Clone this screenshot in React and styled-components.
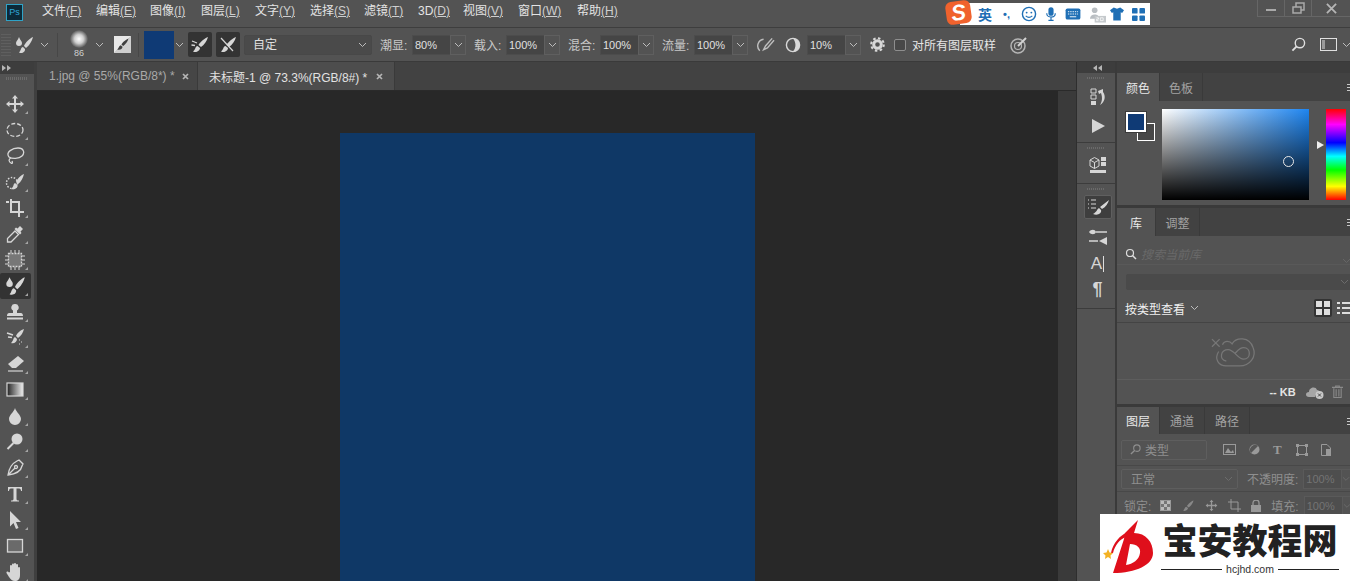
import React from "react";
import styled, { createGlobalStyle } from "styled-components";

const GlobalStyle = createGlobalStyle`
  html, body { margin: 0; padding: 0; height: 100%; overflow: hidden; background: #282828; }
  #root { height: 100%; }
  * { box-sizing: border-box; }
`;

const FONT = `"Liberation Sans", "Noto Sans CJK SC", sans-serif`;
const ICON = "#d6d6d6";
const DIM = "#8f8f8f";
const BLUE = "#1f6fb5";

const MENU = [
  ["文件", "F", 54], ["编辑", "E", 54], ["图像", "I", 51], ["图层", "L", 54], ["文字", "Y", 55],
  ["选择", "S", 54], ["滤镜", "T", 54], ["3D", "D", 45], ["视图", "V", 55], ["窗口", "W", 59], ["帮助", "H", 50],
];

function Brush({ size = 20, color = ICON }) {
  return (
    <svg width={size} height={size} viewBox="0 0 20 20">
      <path d="M18 2 C15 3 10 7 8.500 10 L11 12 C14 10 17 6 18 2Z M7.500 11 C5 11.500 5.500 15 3 16.500 C6 18 10 16 10 13Z" fill={color} />
    </svg>
  );
}

function BrushDrop({ size = 22, color = ICON }) {
  return (
    <svg width={size} height={size} viewBox="0 0 22 22">
      <path d="M6 3 C7 6 9 7 9 9 A3 3 0 0 1 3 9 C3 7 5 6 6 3Z" fill={color} />
      <path d="M20 3 C17 4 12 9 11 12 L13 14 C16 12 19 7 20 3Z M10 13 C7.500 13.500 8 17 6 18.500 C9 20 12.500 18 12 15Z" fill={color} />
    </svg>
  );
}

function Caret({ color = "#bdbdbd" }) {
  return (
    <svg width="9" height="6" viewBox="0 0 9 6">
      <path d="M1 1 L4.500 4.500 L8 1" fill="none" stroke={color} strokeWidth="1" />
    </svg>
  );
}

function DoubleArrow({ left }) {
  return (
    <svg width="9" height="6" viewBox="0 0 9 6">
      {left
        ? <path d="M4 0 V6 L0 3Z M9 0 V6 L5 3Z" fill="#b5b5b5" />
        : <path d="M0 0 V6 L4 3Z M5 0 V6 L9 3Z" fill="#b5b5b5" />}
    </svg>
  );
}

function CloseX() {
  return (
    <svg width="7" height="7" viewBox="0 0 7 7">
      <path d="M1 1 L6 6 M6 1 L1 6" stroke="#b5b5b5" strokeWidth="1.700" />
    </svg>
  );
}

const TOOLS = [
  <path d="M10 1 L13 4.500 H11 V9 H15.500 V7 L19 10 L15.500 13 V11 H11 V15.500 H13 L10 19 L7 15.500 H9 V11 H4.500 V13 L1 10 L4.500 7 V9 H9 V4.500 H7Z" fill={ICON} />,
  <ellipse cx="10" cy="10" rx="8" ry="6.500" fill="none" stroke={ICON} strokeWidth="1.300" strokeDasharray="4 2" />,
  <path d="M4 11 C0 6 8 2 13 2 C19 2 20 7 17 10 C14 13 7 13 4 11 M6 12 C3 13 4 16 6 17 C7 18 8 17 7 15" fill="none" stroke={ICON} strokeWidth="1.300" />,
  <><circle cx="7" cy="11" r="5.500" fill="none" stroke={ICON} strokeWidth="1.500" strokeDasharray="1.500 1.500" /><path d="M19 2 C16 3 12 7 11 10 L13 12 C16 10 18 6 19 2Z M10 11 C8 12 9 15 6 17 C10 18 13 16 12.500 13Z" fill={ICON} /></>,
  <path d="M1 4 H4 M6 1 V14 H18 M6 4 H14 V17 M16 14 H19 M14 14 V19" fill="none" stroke={ICON} strokeWidth="2" />,
  <><path d="M15 2 L18 5 L15.500 7.500 L16.500 9 L15 10.500 L9.500 5 L11 3.500 L12.500 4.500Z" fill={ICON} /><path d="M10 7 L13.500 10.500 L6 18 L2.500 18 L2.500 14.500Z" fill="none" stroke={ICON} strokeWidth="1.300" /></>,
  <><rect x="3.500" y="3.500" width="13" height="13" fill="#777" stroke={ICON} strokeWidth="1.300" strokeDasharray="2 1" /><path d="M6 0 V3 M10 0 V3 M14 0 V3 M6 17 V20 M10 17 V20 M14 17 V20 M0 6 H3 M0 10 H3 M0 14 H3 M17 6 H20 M17 10 H20 M17 14 H20" stroke={ICON} strokeWidth="1" /></>,
  null,
  <path d="M10 2 A3.500 3.500 0 0 1 12 8.500 V11 H16 C18 11 18 14 18 14 H2 C2 14 2 11 4 11 H8 V8.500 A3.500 3.500 0 0 1 10 2Z M2 15.500 H18 V17.500 H2Z" fill={ICON} />,
  <><path d="M19 1 C16 2 12 5 11 8 L13 10 C16 8 18 5 19 1Z M10 9 C8 10 8.500 13 6 15 C9 16 12 14 12 11Z" fill={ICON} /><path d="M2 5 L8 7 M3 9 L7 9.500" stroke={ICON} strokeWidth="1.500" /><path d="M14 12 h1 M16 14 h1 M14 16 h1" stroke={ICON} /></>,
  <><path d="M13 2 L19 7 L11 14 H7 L3 10Z" fill={ICON} /><path d="M3 17 H18" stroke={ICON} strokeWidth="1.200" /></>,
  <><defs><linearGradient id="toolGrad"><stop offset="0" stopColor="#222" /><stop offset="1" stopColor="#eee" /></linearGradient></defs><rect x="2" y="3" width="16" height="13" fill="url(#toolGrad)" stroke={ICON} strokeWidth="1.200" /></>,
  <path d="M10 2 C11 6 16 9 16 13 A6 6 0 0 1 4 13 C4 9 9 6 10 2Z" fill={ICON} />,
  <><circle cx="12" cy="7" r="5.500" fill={ICON} /><path d="M8.500 11 L2.500 17" stroke={ICON} strokeWidth="2" /></>,
  <path d="M14 2 L18 6 L17 8 C16 13 11 16 3 17 C4 10 8 5 12 3Z M4 16 L9.500 10.500 M11 9 m-1.500 0 a1.500 1.500 0 1 0 3 0 a1.500 1.500 0 1 0 -3 0" fill="none" stroke={ICON} strokeWidth="1.300" />,
  <path d="M3 3 H17 V7 H16 C16 5 15 4.500 13 4.500 H11.500 V15 C11.500 16 12.500 16.500 14 16.500 V17.500 H6 V16.500 C7.500 16.500 8.500 16 8.500 15 V4.500 H7 C5 4.500 4 5 4 7 H3Z" fill={ICON} />,
  <path d="M5 1 L16 12 H11 L13.500 18 L11 19 L8.500 13 L5 16.500Z" fill={ICON} />,
  <rect x="2.500" y="3.500" width="15" height="12.500" fill="#6a6a6a" stroke={ICON} strokeWidth="1.300" />,
  <path d="M5 10 V4 A1 1 0 0 1 7 4 V9 V2.500 A1 1 0 0 1 9 2.500 V9 V2 A1 1 0 0 1 11 2 V9 V3 A1 1 0 0 1 13 3 V10 V6 A1 1 0 0 1 15 6 V13 C15 17 13 19 10 19 C7 19 6 17.500 4 15 L1.500 11 C1 9.500 3 9 4 10.500Z" fill={ICON} />,
];

function PercentField({ value }) {
  return (
    <>
      <Percent>{value}</Percent>
      <PercentCaret><Caret /></PercentCaret>
    </>
  );
}

function App() {
  return (
    <Window>
      <GlobalStyle />
      <MenuBar>
        <PsLogo>Ps</PsLogo>
        {MENU.map(([name, key, w]) => (
          <MenuItem key={key} $w={w}>{name}<Mnemonic>({key})</Mnemonic></MenuItem>
        ))}
        <WindowControls>
          <WinButton><svg width="12" height="12" viewBox="0 0 12 12"><rect x="1" y="7" width="10" height="2" fill="#a9a9a9" /></svg></WinButton>
          <WinButton><svg width="13" height="13" viewBox="0 0 13 13"><path d="M4 1 H12 V8 H9 V11 H1 V5 H4Z M4 5 H9 V8" fill="none" stroke="#a9a9a9" strokeWidth="1.500" /></svg></WinButton>
          <WinButton $wide><svg width="11" height="11" viewBox="0 0 12 12"><path d="M1 1 L11 11 M11 1 L1 11" stroke="#b5b5b5" strokeWidth="2" /></svg></WinButton>
        </WindowControls>
      </MenuBar>
      <Sogou>
        <SogouBadge>S</SogouBadge>
        <SogouRow>
          <SogouText>英</SogouText>
          <SogouPunct>•,</SogouPunct>
          <svg width="16" height="16" viewBox="0 0 17 17"><circle cx="8.500" cy="8.500" r="7" fill="none" stroke={BLUE} strokeWidth="1.500" /><circle cx="6" cy="7" r="1" fill={BLUE} /><circle cx="11" cy="7" r="1" fill={BLUE} /><path d="M5 10.500 Q8.500 13.500 12 10.500" fill="none" stroke={BLUE} strokeWidth="1.200" /></svg>
          <svg width="12" height="18" viewBox="0 0 14 18"><rect x="4" y="1" width="6" height="10" rx="3" fill={BLUE} /><path d="M2 8 C2 14 12 14 12 8 M7 13 V16 M4 16.500 H10" fill="none" stroke={BLUE} strokeWidth="1.400" /></svg>
          <svg width="16" height="12" viewBox="0 0 17 13"><rect x="0.500" y="0.500" width="16" height="12" rx="2" fill={BLUE} /><path d="M3 4 H14 M3 6.500 H14" stroke="#fff" strokeDasharray="1.500 1" /><path d="M5 9.500 H12" stroke="#fff" /></svg>
          <svg width="17" height="17" viewBox="0 0 18 17"><circle cx="6" cy="4" r="3" fill="#b9bec2" /><path d="M1 13 C1 7 11 7 11 13Z" fill="#b9bec2" /><rect x="6" y="10" width="12" height="7" fill="#c5c9cc" /><path d="M8 12 h2 v1.500 h-2 v1.500 h2 M12 12 h3 v3 h-3z" fill="none" stroke="#fff" strokeWidth="0.800" /></svg>
          <SogouShirt width="14" height="14" viewBox="0 0 15 14"><path d="M4 0 L7.500 1.500 L11 0 L15 3 L13 6 L11.500 5 V14 H3.500 V5 L2 6 L0 3Z" fill={BLUE} /></SogouShirt>
          <svg width="13" height="13" viewBox="0 0 14 14"><rect width="6" height="6" rx="1" fill={BLUE} /><rect x="8" width="6" height="6" rx="1" fill={BLUE} /><rect y="8" width="6" height="6" rx="1" fill={BLUE} /><rect x="8" y="8" width="6" height="6" rx="1" fill={BLUE} /></svg>
        </SogouRow>
      </Sogou>
      <OptionsBar>
        <Grip />
        <IconSlot $w={26}><BrushDrop /></IconSlot>
        <IconSlot $w={14}><Caret /></IconSlot>
        <Divider $ml={6} $mr={8} />
        <BrushPreset><SoftDot /><PresetSize>86</PresetSize></BrushPreset>
        <IconSlot $w={14}><Caret /></IconSlot>
        <PanelToggle><Brush size={15} color="#3f3f3f" /></PanelToggle>
        <Divider $ml={7} $mr={5} />
        <ColorChip />
        <IconSlot $w={10} $mr={4}><Caret /></IconSlot>
        <DarkToggle>
          <svg width="20" height="20" viewBox="0 0 20 20"><path d="M18 2 C15 3 10 7 8.500 10 L11 12 C14 10 17 6 18 2Z M7.500 11 C5 11.500 5.500 15 3 16.500 C6 18 10 16 10 13Z" fill={ICON} /><path d="M2 6 L7 8 M1.500 10 L5 10.500" stroke={ICON} strokeWidth="1.300" /></svg>
        </DarkToggle>
        <DarkToggle>
          <svg width="20" height="20" viewBox="0 0 20 20"><path d="M18 2 C15 3 10 7 8.500 10 L11 12 C14 10 17 6 18 2Z M7.500 11 C5 11.500 5.500 15 3 16.500 C6 18 10 16 10 13Z" fill={ICON} /><path d="M3 3 L15 16" stroke={ICON} strokeWidth="1.200" /></svg>
        </DarkToggle>
        <SelectBox>自定<Caret /></SelectBox>
        <Label>潮显:</Label>
        <PercentField value="80%" />
        <Label>载入:</Label>
        <PercentField value="100%" />
        <Label>混合:</Label>
        <PercentField value="100%" />
        <Label>流量:</Label>
        <PercentField value="100%" />
        <IconSlot $w={34}><svg width="19" height="18" viewBox="0 0 20 18"><path d="M8 3 A7 7 0 0 0 4 15 M17 2 L10 10 L8 14 L12 12 L19 4" fill="none" stroke="#bdbdbd" strokeWidth="1.500" /></svg></IconSlot>
        <IconSlot $w={21} $mr={4}><svg width="16" height="16" viewBox="0 0 17 17"><circle cx="8.500" cy="8.500" r="7" fill="none" stroke="#d8d8d8" strokeWidth="1.500" /><path d="M8.500 1.500 A7 7 0 0 1 8.500 15.500 C12 11 12 6 8.500 1.500Z" fill="#d8d8d8" /></svg></IconSlot>
        <PercentField value="10%" />
        <IconSlot $w={33}><svg width="15" height="15" viewBox="0 0 15 15"><circle cx="7.500" cy="7.500" r="3.800" fill="none" stroke="#d8d8d8" strokeWidth="3" /><circle cx="7.500" cy="7.500" r="6.300" fill="none" stroke="#d8d8d8" strokeWidth="2" strokeDasharray="2.500 2.400" /></svg></IconSlot>
        <CheckBox />
        <CheckLabel>对所有图层取样</CheckLabel>
        <IconSlot $w={46}><svg width="18" height="18" viewBox="0 0 18 18"><circle cx="8" cy="10" r="7" fill="none" stroke="#b5b5b5" strokeWidth="1.500" /><circle cx="8" cy="10" r="3.500" fill="none" stroke="#b5b5b5" strokeWidth="1.200" /><path d="M8 10 L16 2" stroke="#d4d4d4" strokeWidth="2" /></svg></IconSlot>
        <OptionsRight>
          <svg width="15" height="15" viewBox="0 0 16 16"><circle cx="9.500" cy="6.500" r="5" fill="none" stroke="#e0e0e0" strokeWidth="1.500" /><path d="M6 10 L1.500 14.500" stroke="#e0e0e0" strokeWidth="2" /></svg>
          <svg width="17" height="13" viewBox="0 0 17 13"><rect x="0.500" y="0.500" width="16" height="12" fill="none" stroke="#e0e0e0" /><rect x="2" y="2" width="3" height="9" fill="#9a9a9a" /></svg>
          <Caret />
        </OptionsRight>
      </OptionsBar>
      <Body>
        <ToolColumn>
          <CollapseStrip><DoubleArrow /></CollapseStrip>
          <ToolGrip />
          {TOOLS.map((icon, i) => (
            <ToolButton key={i} $active={icon === null}>
              {icon === null ? <BrushDrop size={24} /> : <svg width="20" height="20" viewBox="0 0 20 20">{icon}</svg>}
              <Flyout />
            </ToolButton>
          ))}
        </ToolColumn>
        <Center>
          <TabBar>
            <DocTab>1.jpg @ 55%(RGB/8*) *<TabClose $ml={7}><CloseX /></TabClose></DocTab>
            <DocTab $active>未标题-1 @ 73.3%(RGB/8#) *<TabClose $ml={9}><CloseX /></TabClose></DocTab>
          </TabBar>
          <Workspace>
            <Pasteboard><Document /></Pasteboard>
            <ScrollTrack />
          </Workspace>
        </Center>
        <Dock>
          <DockHead><DoubleArrow left /></DockHead>
          <DockGroup $h={70} $pt={15} $gap={12}>
            <svg width="18" height="18" viewBox="0 0 18 18"><path d="M2 1 h5 v4 h-5z M2 7 h5 v4 h-5z" fill="none" stroke={ICON} /><rect x="2" y="13" width="5" height="4" fill={ICON} /><path d="M9 3 L14 1 V4 C17 8 16 14 11 17 C14 12 13 8 12 5 L10 6Z" fill={ICON} /></svg>
            <svg width="16" height="16" viewBox="0 0 16 16"><path d="M2 1 L15 8 L2 15Z" fill={ICON} /></svg>
          </DockGroup>
          <DockGroup $h={41} $pt={13} $gap={10}>
            <svg width="18" height="18" viewBox="0 0 18 18"><path d="M1 4 L5.500 1.500 L10 4 V10 L5.500 12.500 L1 10Z M1 4 L5.500 6.500 L10 4 M5.500 6.500 V12.500" fill="none" stroke={ICON} /><rect x="12" y="1" width="5" height="4" fill={ICON} /><rect x="12" y="6" width="5" height="4" fill={ICON} /><rect x="1" y="14" width="16" height="3" fill={ICON} /></svg>
          </DockGroup>
          <DockGroup $h={125} $pt={11} $gap={9}>
            <DockActive><svg width="24" height="20" viewBox="0 0 24 20"><path d="M2 3 H3 M5 3 H10 M2 7 H3 M5 7 H10 M2 11 H3 M5 11 H10" stroke={ICON} /><path d="M23 3 L14 10 L16 12 C20 10 22 6 23 3Z M13 11 C11 12 11 15 7 17 C12 19 16 16 15 13Z" fill={ICON} /></svg></DockActive>
            <svg width="20" height="18" viewBox="0 0 20 18"><path d="M8 4 H19 M1 13 H10" stroke={ICON} strokeWidth="1.500" /><path d="M1 4 C3 1 7 1 8 4 C7 7 3 7 1 4Z M11 13 L19 9 V17Z" fill={ICON} /></svg>
            <DockGlyph>A<DockCursor /></DockGlyph>
            <DockGlyph $para>¶</DockGlyph>
          </DockGroup>
        </Dock>
        <Panels>
          <PanelsHead><DoubleArrow /></PanelsHead>
          <Panel $h={132}>
            <PanelTabs>
              <PanelTab $active>颜色</PanelTab><PanelTab>色板</PanelTab><PanelMenu />
            </PanelTabs>
            <ColorBody>
              <Swatches><BackSwatch /><FrontSwatch /></Swatches>
              <Picker><PickerRing /></Picker>
              <HueBar />
            </ColorBody>
          </Panel>
          <Panel $h={196}>
            <PanelTabs>
              <PanelTab $active $w={39}>库</PanelTab><PanelTab $w={44}>调整</PanelTab><PanelMenu />
            </PanelTabs>
            <LibSearch>
              <svg width="12" height="12" viewBox="0 0 12 12"><circle cx="5" cy="5" r="3.500" fill="none" stroke="#ddd" strokeWidth="1.200" /><path d="M7.500 7.500 L11 11" stroke="#ddd" strokeWidth="1.500" /></svg>
              <SearchHint>搜索当前库</SearchHint>
              <RightCaret><Caret color="#666" /></RightCaret>
            </LibSearch>
            <LibSelect><Caret color="#6c6c6c" /></LibSelect>
            <LibFilter>
              <span>按类型查看</span><Caret />
              <ViewButtons>
                <ViewActive><svg width="14" height="14" viewBox="0 0 14 14"><rect width="6" height="6" fill="#ddd" /><rect x="8" width="6" height="6" fill="#ddd" /><rect y="8" width="6" height="6" fill="#ddd" /><rect x="8" y="8" width="6" height="6" fill="#ddd" /></svg></ViewActive>
                <svg width="14" height="14" viewBox="0 0 14 14"><path d="M0 2 H3 M5 2 H14 M0 7 H3 M5 7 H14 M0 12 H3 M5 12 H14" stroke="#ddd" strokeWidth="2" /></svg>
              </ViewButtons>
            </LibFilter>
            <LibEmpty>
              <svg width="46" height="33" viewBox="0 0 48 34"><path d="M1 3 L9 11 M9 3 L1 11" stroke="#777" strokeWidth="1.300" /><path d="M12 9 C14 4 20 5 22 8 C26 1 40 0 44 12 C48 22 40 31 30 31 H16 C8 31 3 24 8 16 M16 26 C8 24 10 14 18 14 C24 14 28 24 34 24 C42 24 42 12 34 12 C30 12 28 15 25 18" fill="none" stroke="#777" strokeWidth="1.300" /></svg>
            </LibEmpty>
            <LibFooter>
              <FooterSize>-- KB</FooterSize>
              <svg width="19" height="14" viewBox="0 0 19 14"><path d="M4 12 C0 12 0 7 4 7 C4 2 11 1 12 5 C12 5 15 5 15 8 A4.500 4.500 0 0 0 10 12Z" fill="#a6a6a6" /><circle cx="14.500" cy="10" r="4" fill="#c9c9c9" /><path d="M13 8.500 L16 11.500 M16 8.500 L13 11.500" stroke="#444" /></svg>
              <svg width="11" height="14" viewBox="0 0 12 14"><path d="M0 2 H12 M4 2 V0.500 H8 V2 M2 3 V13 H10 V3 M4.500 4 V12 M7.500 4 V12" fill="none" stroke="#8a8a8a" strokeWidth="1.200" /></svg>
            </LibFooter>
          </Panel>
          <Panel>
            <PanelTabs $h={27}>
              <PanelTab $active>图层</PanelTab><PanelTab $w={45}>通道</PanelTab><PanelTab $w={45}>路径</PanelTab><PanelMenu />
            </PanelTabs>
            <LayerRow $h={32}>
              <LayerFilter>
                <svg width="11" height="11" viewBox="0 0 12 12"><circle cx="7.500" cy="4.500" r="3.500" fill="none" stroke={DIM} strokeWidth="1.200" /><path d="M5 7 L1 11" stroke={DIM} strokeWidth="1.500" /></svg>
                类型
              </LayerFilter>
              <LayerIcons $gap={13}>
                <svg width="13" height="11" viewBox="0 0 13 11"><rect x="0.500" y="0.500" width="12" height="10" fill="none" stroke="#9a9a9a" /><path d="M2 9 L5 4 L8 8 L10 6 L11 9Z" fill="#9a9a9a" /></svg>
                <svg width="11" height="11" viewBox="0 0 11 11"><circle cx="5.500" cy="5.500" r="5" fill="#9a9a9a" /><path d="M2 9 L9 2 A5 5 0 0 0 2 9Z" fill="#555" /></svg>
                <LayerGlyph>T</LayerGlyph>
                <svg width="12" height="12" viewBox="0 0 12 12"><rect x="1.500" y="1.500" width="9" height="9" fill="none" stroke="#9a9a9a" /><path d="M0 0 h3 v3 h-3z M9 0 h3 v3 h-3z M0 9 h3 v3 h-3z M9 9 h3 v3 h-3z" fill="#9a9a9a" /></svg>
                <svg width="10" height="12" viewBox="0 0 10 12"><path d="M0.500 0.500 H6 L9.500 4 V11.500 H0.500Z" fill="none" stroke="#9a9a9a" /><rect x="5" y="5" width="5" height="7" fill="#9a9a9a" /></svg>
              </LayerIcons>
            </LayerRow>
            <LayerRow $h={26}>
              <BlendSelect>正常<Caret color="#6c6c6c" /></BlendSelect>
              <DimLabel $ml={9}>不透明度:</DimLabel>
              <DimValue>100%</DimValue>
              <DimCaret><Caret color="#6c6c6c" /></DimCaret>
            </LayerRow>
            <LayerRow $h={28}>
              <DimLabel $ml={3}>锁定:</DimLabel>
              <LayerIcons $gap={10} $ml={9}>
                <svg width="11" height="11" viewBox="0 0 11 11"><rect x="0.500" y="0.500" width="10" height="10" fill="#777" stroke="#999" /><rect x="1" y="1" width="3" height="3" fill="#bbb" /><rect x="7" y="1" width="3" height="3" fill="#bbb" /><rect x="4" y="4" width="3" height="3" fill="#bbb" /><rect x="1" y="7" width="3" height="3" fill="#bbb" /><rect x="7" y="7" width="3" height="3" fill="#bbb" /></svg>
                <Brush size={14} color="#888" />
                <svg width="13" height="13" viewBox="0 0 20 20"><path d="M10 1 L13 4.500 H11 V9 H15.500 V7 L19 10 L15.500 13 V11 H11 V15.500 H13 L10 19 L7 15.500 H9 V11 H4.500 V13 L1 10 L4.500 7 V9 H9 V4.500 H7Z" fill="#999" /></svg>
                <svg width="13" height="13" viewBox="0 0 13 13"><path d="M0 3 H10 V13 M3 0 V10 H13" fill="none" stroke="#999" /></svg>
                <svg width="10" height="12" viewBox="0 0 10 12"><rect y="5" width="10" height="7" fill="#999" /><path d="M2 5 V3 A3 3 0 0 1 8 3 V5" fill="none" stroke="#999" strokeWidth="1.300" /></svg>
              </LayerIcons>
              <DimLabel $ml={10}>填充:</DimLabel>
              <DimValue>100%</DimValue>
              <DimCaret><Caret color="#6c6c6c" /></DimCaret>
            </LayerRow>
          </Panel>
        </Panels>
      </Body>
      <Watermark>
        <svg width="56" height="66" viewBox="0 4 56 66">
          <path d="M38 10 L34 23 C46 23 53 32 53 43 C53 55 36 63 13 63 L24 29 L25 23 L30 18Z M30 34 C37 34 41 38 40 43 C39 50 33 54 26 55Z" fill="#df0f1b" fillRule="evenodd" />
          <path d="M11 43 C13 33 20 25 28 22 L26 27 C20 29 15 35 13 43Z" fill="#df0f1b" />
          <path d="M8 39 L9.500 42.500 L13 43 L10.500 45.500 L11 49 L8 47 L5 49 L5.500 45.500 L3 43 L6.500 42.500Z" fill="#f4b223" />
        </svg>
        <WatermarkText>
          <WatermarkTitle>宝安教程网</WatermarkTitle>
          <WatermarkUrl><Rule />hcjhd.com<Rule /></WatermarkUrl>
        </WatermarkText>
      </Watermark>
    </Window>
  );
}

const Window = styled.div`
  position: relative;
  width: 1350px;
  height: 581px;
  overflow: hidden;
  display: flex;
  flex-direction: column;
  font-family: ${FONT};
  background: #282828;
`;

const MenuBar = styled.div`
  height: 28px;
  flex: none;
  background: #535353;
  border-bottom: 1px solid #3e3e3e;
  display: flex;
  align-items: flex-start;
  padding-left: 6px;
`;
const PsLogo = styled.div`
  width: 17px;
  height: 17px;
  margin: 4px 19px 0 0;
  flex: none;
  background: #0c2a38;
  border: 1px solid #2fa3c7;
  color: #31a8d8;
  font-size: 9px;
  line-height: 15px;
  text-align: center;
`;
const MenuItem = styled.div`
  width: ${(p) => p.$w}px;
  flex: none;
  margin-top: 3px;
  color: #e4e4e4;
  font-size: 12px;
  line-height: 17px;
  white-space: nowrap;
`;
const Mnemonic = styled.span`
  text-decoration: underline;
  color: #cfcfcf;
`;
const WindowControls = styled.div`
  margin-left: auto;
  height: 17px;
  display: flex;
  flex: none;
  border-left: 1px solid #666;
  border-bottom: 1px solid #666;
`;
const WinButton = styled.div`
  width: ${(p) => (p.$wide ? "38px" : "27px")};
  display: flex;
  align-items: center;
  justify-content: center;
  border-right: ${(p) => (p.$wide ? "none" : "1px solid #666")};
`;

const Sogou = styled.div`
  position: absolute;
  left: 945px;
  top: 0;
  width: 205px;
  height: 25px;
  z-index: 3;
`;
const SogouBadge = styled.div`
  position: absolute;
  left: 1px;
  top: 1px;
  width: 25px;
  height: 23px;
  background: #f0622d;
  border-radius: 6px;
  transform: rotate(-8deg);
  color: #fff;
  font: italic 900 22px/23px "Liberation Sans", sans-serif;
  text-align: center;
  z-index: 1;
`;
const SogouRow = styled.div`
  position: absolute;
  left: 15px;
  right: 0;
  top: 3px;
  height: 22px;
  background: #fff;
  display: flex;
  align-items: center;
  padding-left: 18px;
  gap: 8px;
`;
const SogouText = styled.span`
  width: 14px;
  color: ${BLUE};
  font-size: 14px;
  font-weight: bold;
`;
const SogouPunct = styled.span`
  width: 13px;
  color: ${BLUE};
  font-size: 11px;
  font-weight: bold;
  text-align: center;
`;
const SogouShirt = styled.svg`
  margin-left: -4px;
`;

const OptionsBar = styled.div`
  height: 34px;
  flex: none;
  background: #535353;
  border-bottom: 1px solid #3a3a3a;
  display: flex;
  align-items: center;
`;
const Grip = styled.div`
  width: 10px;
  height: 22px;
  margin-left: 1px;
  background: repeating-linear-gradient(0deg, #5f5f5f 0 1px, transparent 1px 3px);
  flex: none;
`;
const IconSlot = styled.div`
  width: ${(p) => p.$w}px;
  margin-right: ${(p) => p.$mr || 0}px;
  flex: none;
  display: flex;
  align-items: center;
  justify-content: center;
`;
const Divider = styled.div`
  width: 1px;
  height: 24px;
  background: #474747;
  flex: none;
  margin: 0 ${(p) => p.$mr}px 0 ${(p) => p.$ml}px;
`;
const BrushPreset = styled.div`
  width: 26px;
  height: 30px;
  display: flex;
  flex-direction: column;
  align-items: center;
  flex: none;
`;
const SoftDot = styled.div`
  width: 18px;
  height: 18px;
  border-radius: 50%;
  background: radial-gradient(circle, #fff 0%, #cfcfcf 35%, #535353 72%);
  flex: none;
`;
const PresetSize = styled.div`
  color: #d0d0d0;
  font-size: 9px;
  line-height: 10px;
`;
const PanelToggle = styled.div`
  width: 17px;
  height: 17px;
  background: linear-gradient(135deg, #e8e8e8 50%, #cfcfcf 50%);
  display: flex;
  align-items: center;
  justify-content: center;
  flex: none;
  margin-left: 8px;
`;
const ColorChip = styled.div`
  width: 30px;
  height: 28px;
  background: #0f3a75;
  flex: none;
`;
const DarkToggle = styled.div`
  width: 24px;
  height: 25px;
  margin-right: 4px;
  background: #333;
  border-radius: 2px;
  display: flex;
  align-items: center;
  justify-content: center;
  flex: none;
`;
const SelectBox = styled.div`
  width: 128px;
  height: 20px;
  flex: none;
  background: #4a4a4a;
  border: 1px solid #484848;
  border-radius: 2px;
  color: #e0e0e0;
  font-size: 12px;
  line-height: 18px;
  padding: 0 4px 0 8px;
  display: flex;
  align-items: center;
  justify-content: space-between;
`;
const Label = styled.div`
  color: #c9c9c9;
  font-size: 12px;
  flex: none;
  width: 32px;
  margin-left: 8px;
  white-space: nowrap;
`;
const Percent = styled.div`
  width: 38px;
  height: 20px;
  background: #454545;
  border: 1px solid #4c4c4c;
  border-right: none;
  color: #e0e0e0;
  font-size: 11px;
  line-height: 18px;
  padding-left: 2px;
  flex: none;
`;
const PercentCaret = styled.div`
  width: 16px;
  height: 20px;
  border: 1px solid #5f5f5f;
  display: flex;
  align-items: center;
  justify-content: center;
  flex: none;
`;
const CheckBox = styled.div`
  width: 12px;
  height: 12px;
  border: 1px solid #8e8e8e;
  border-radius: 2px;
  background: #484848;
  flex: none;
`;
const CheckLabel = styled.div`
  color: #e6e6e6;
  font-size: 12px;
  margin-left: 6px;
  flex: none;
`;
const OptionsRight = styled.div`
  margin-left: auto;
  display: flex;
  align-items: center;
  gap: 14px;
  margin-right: -1px;
  flex: none;
  & > svg:last-child { margin-left: -9px; }
`;

const Body = styled.div`
  flex: 1;
  display: flex;
  min-height: 0;
`;
const ToolColumn = styled.div`
  width: 37px;
  flex: none;
  background: #535353;
  border-right: 3px solid #3f3f3f;
  display: flex;
  flex-direction: column;
  overflow: hidden;
`;
const CollapseStrip = styled.div`
  height: 12px;
  flex: none;
  background: #3d3d3d;
  display: flex;
  align-items: center;
  padding-left: 2px;
`;
const ToolGrip = styled.div`
  height: 17px;
  flex: none;
  position: relative;
  &::after {
    content: "";
    position: absolute;
    left: 6px;
    right: 6px;
    top: 3px;
    height: 3px;
    background: repeating-linear-gradient(90deg, #6a6a6a 0 1px, transparent 1px 2px);
  }
`;
const ToolButton = styled.div`
  position: relative;
  height: 26px;
  flex: none;
  width: 31px;
  display: flex;
  align-items: center;
  justify-content: center;
  padding-right: 1px;
  border-radius: 2px;
  background: ${(p) => (p.$active ? "#333" : "transparent")};
`;
const Flyout = styled.div`
  position: absolute;
  right: 3px;
  bottom: 3px;
  width: 0;
  height: 0;
  border-left: 3px solid transparent;
  border-bottom: 3px solid #a5a5a5;
`;

const Center = styled.div`
  flex: none;
  width: 1039px;
  display: flex;
  flex-direction: column;
  background: #282828;
`;
const TabBar = styled.div`
  height: 29px;
  flex: none;
  display: flex;
  background: #424242;
  border-bottom: 1px solid #2a2a2a;
`;
const DocTab = styled.div`
  width: ${(p) => (p.$active ? "197px" : "161px")};
  display: flex;
  align-items: center;
  padding-left: ${(p) => (p.$active ? "11px" : "12px")};
  background: ${(p) => (p.$active ? "#4d4d4d" : "#464646")};
  color: ${(p) => (p.$active ? "#e2e2e2" : "#a9a9a9")};
  font-size: 12px;
  white-space: nowrap;
  border-right: 1px solid #3a3a3a;
`;
const TabClose = styled.span`
  display: flex;
  margin-left: ${(p) => p.$ml}px;
`;
const Workspace = styled.div`
  flex: 1;
  display: flex;
  min-height: 0;
`;
const Pasteboard = styled.div`
  flex: 1;
  background: #282828;
  padding: 42px 0 0 303px;
`;
const Document = styled.div`
  width: 415px;
  height: 448px;
  background: #0f3866;
`;
const ScrollTrack = styled.div`
  width: 18px;
  flex: none;
  background: #3a3a3a;
`;

const Dock = styled.div`
  width: 41px;
  flex: none;
  background: #535353;
  border-left: 1px solid #2e2e2e;
  border-right: 2px solid #3a3a3a;
  display: flex;
  flex-direction: column;
`;
const DockHead = styled.div`
  height: 11px;
  flex: none;
  background: #3d3d3d;
  display: flex;
  align-items: center;
  justify-content: center;
  padding-left: 3px;
`;
const DockGroup = styled.div`
  position: relative;
  height: ${(p) => p.$h}px;
  flex: none;
  border-bottom: 1px solid #3c3c3c;
  display: flex;
  flex-direction: column;
  align-items: center;
  padding: ${(p) => p.$pt}px 0 0 3px;
  gap: ${(p) => p.$gap}px;
  &::before {
    content: "";
    position: absolute;
    left: 10px;
    right: 10px;
    top: 4px;
    height: 2px;
    background: repeating-linear-gradient(90deg, #6a6a6a 0 1px, transparent 1px 2px);
  }
`;
const DockActive = styled.div`
  width: 28px;
  height: 24px;
  background: #3e3e3e;
  border: 1px solid #5f5f5f;
  border-radius: 2px;
  display: flex;
  align-items: center;
  justify-content: center;
  overflow: hidden;
`;
const DockGlyph = styled.div`
  color: ${ICON};
  font-size: ${(p) => (p.$para ? "18px" : "17px")};
  font-weight: ${(p) => (p.$para ? "bold" : "normal")};
  line-height: 17px;
  display: flex;
  align-items: center;
`;
const DockCursor = styled.span`
  width: 1px;
  height: 16px;
  background: #ddd;
  margin-left: 1px;
`;

const Panels = styled.div`
  flex: 1;
  display: flex;
  flex-direction: column;
  background: #3a3a3a;
`;
const PanelsHead = styled.div`
  height: 11px;
  flex: none;
  background: #3d3d3d;
  display: flex;
  align-items: center;
  justify-content: flex-end;
  margin-right: -7px;
`;
const Panel = styled.div`
  height: ${(p) => (p.$h ? `${p.$h}px` : "auto")};
  flex: ${(p) => (p.$h ? "none" : "1")};
  background: #535353;
  margin-bottom: 3px;
  display: flex;
  flex-direction: column;
  overflow: hidden;
`;
const PanelTabs = styled.div`
  height: ${(p) => p.$h || 28}px;
  flex: none;
  display: flex;
  background: #424242;
  position: relative;
`;
const PanelTab = styled.div`
  width: ${(p) => p.$w || 43}px;
  display: flex;
  align-items: center;
  justify-content: center;
  font-size: 12px;
  background: ${(p) => (p.$active ? "#535353" : "#424242")};
  color: ${(p) => (p.$active ? "#e8e8e8" : "#a3a3a3")};
  border-right: 1px solid #3a3a3a;
`;
const PanelMenu = styled.div`
  position: absolute;
  right: 0;
  top: 11px;
  width: 5px;
  height: 7px;
  background: repeating-linear-gradient(0deg, #c9c9c9 0 1px, transparent 1px 3px);
`;
const ColorBody = styled.div`
  flex: 1;
  display: flex;
  align-items: flex-start;
  padding: 8px 0 0 9px;
`;
const Swatches = styled.div`
  position: relative;
  flex: none;
  width: 29px;
  height: 29px;
  margin: 3px 7px 0 0;
`;
const FrontSwatch = styled.div`
  position: absolute;
  left: 0;
  top: 0;
  width: 20px;
  height: 20px;
  background: #0f3a75;
  border: 2px solid #fff;
  outline: 1px solid #3a3a3a;
`;
const BackSwatch = styled.div`
  position: absolute;
  right: 0;
  bottom: 0;
  width: 18px;
  height: 18px;
  background: #474747;
  border: 1px solid #fff;
`;
const Picker = styled.div`
  position: relative;
  flex: none;
  width: 147px;
  height: 91px;
  background:
    linear-gradient(to bottom, transparent, #000),
    linear-gradient(to right, #fff, #1e85f0);
`;
const PickerRing = styled.div`
  position: absolute;
  left: 121px;
  top: 47px;
  width: 11px;
  height: 11px;
  border-radius: 50%;
  border: 1px solid #e8e8e8;
`;
const HueBar = styled.div`
  position: relative;
  flex: none;
  margin-left: 17px;
  width: 20px;
  height: 91px;
  background: linear-gradient(to bottom, #f00, #f0f 17%, #00f 37%, #0ff 52%, #0f0 67%, #ff0 85%, #f00);
  &::before {
    content: "";
    position: absolute;
    left: -9px;
    top: 32px;
    width: 0;
    height: 0;
    border-left: 7px solid #eee;
    border-top: 4px solid transparent;
    border-bottom: 4px solid transparent;
  }
`;
const LibSearch = styled.div`
  height: 29px;
  flex: none;
  position: relative;
  display: flex;
  align-items: center;
  padding: 7px 0 0 8px;
  border-bottom: 1px solid #595959;
`;
const SearchHint = styled.span`
  color: #696969;
  font-size: 12px;
  font-style: italic;
  margin-left: 4px;
`;
const RightCaret = styled.span`
  position: absolute;
  right: 1px;
  top: 14px;
`;
const LibSelect = styled.div`
  height: 16px;
  flex: none;
  margin: 9px 0 0 9px;
  background: #4a4a4a;
  border-radius: 2px;
  display: flex;
  align-items: center;
  justify-content: flex-end;
  padding-right: 3px;
`;
const LibFilter = styled.div`
  height: 33px;
  flex: none;
  display: flex;
  align-items: center;
  gap: 5px;
  padding: 4px 0 0 8px;
  color: #f0f0f0;
  font-size: 12px;
  border-bottom: 1px solid #444;
`;
const ViewButtons = styled.div`
  margin-left: auto;
  display: flex;
  align-items: center;
  gap: 5px;
  margin-right: 1px;
`;
const ViewActive = styled.div`
  width: 18px;
  height: 18px;
  background: #333;
  border-radius: 2px;
  display: flex;
  align-items: center;
  justify-content: center;
`;
const LibEmpty = styled.div`
  flex: 1;
  display: flex;
  align-items: center;
  justify-content: center;
  padding-top: 3px;
`;
const LibFooter = styled.div`
  height: 25px;
  flex: none;
  border-top: 1px solid #5d5d5d;
  display: flex;
  align-items: center;
  justify-content: flex-end;
  gap: 8px;
  padding-right: 9px;
  color: #e4e4e4;
  font-size: 11px;
`;
const FooterSize = styled.span`
  font-weight: bold;
  margin-right: 1px;
`;
const LayerRow = styled.div`
  height: ${(p) => p.$h}px;
  flex: none;
  display: flex;
  align-items: center;
  padding-left: 4px;
  border-bottom: 1px solid #484848;
`;
const LayerFilter = styled.div`
  width: 86px;
  height: 20px;
  border: 1px solid #5e5e5e;
  border-radius: 2px;
  color: ${DIM};
  font-size: 12px;
  padding-left: 8px;
  flex: none;
  display: flex;
  align-items: center;
  gap: 4px;
`;
const LayerIcons = styled.div`
  display: flex;
  align-items: center;
  flex: none;
  gap: ${(p) => p.$gap}px;
  margin-left: ${(p) => p.$ml || 16}px;
`;
const LayerGlyph = styled.span`
  width: 10px;
  color: #9a9a9a;
  font: bold 13px "Liberation Serif", serif;
`;
const BlendSelect = styled.div`
  width: 117px;
  height: 20px;
  border: 1px solid #5e5e5e;
  border-radius: 2px;
  color: ${DIM};
  font-size: 12px;
  padding: 0 4px 0 9px;
  flex: none;
  display: flex;
  align-items: center;
  justify-content: space-between;
`;
const DimLabel = styled.span`
  color: ${DIM};
  font-size: 12px;
  white-space: nowrap;
  flex: none;
  margin-left: ${(p) => p.$ml || 0}px;
`;
const DimValue = styled.span`
  width: 38px;
  height: 20px;
  flex: none;
  margin-left: 5px;
  padding-left: 2px;
  background: #4e4e4e;
  border: 1px solid #5a5a5a;
  border-right: none;
  color: #747474;
  font-size: 11px;
  line-height: 18px;
`;
const DimCaret = styled.span`
  width: 10px;
  height: 20px;
  flex: none;
  border: 1px solid #5a5a5a;
  display: flex;
  align-items: center;
  justify-content: flex-end;
`;

const Watermark = styled.div`
  position: absolute;
  left: 1100px;
  top: 514px;
  width: 250px;
  height: 67px;
  background: #fff;
  display: flex;
  align-items: flex-start;
  gap: 5px;
  z-index: 4;
`;
const WatermarkText = styled.div`
  display: flex;
  flex-direction: column;
  align-items: center;
  width: 178px;
  padding-top: 7px;
`;
const WatermarkTitle = styled.div`
  color: #222;
  font: 900 35px/36px "Noto Sans CJK SC", sans-serif;
  white-space: nowrap;
`;
const WatermarkUrl = styled.div`
  display: flex;
  align-items: center;
  gap: 4px;
  margin-top: 6px;
  color: #333;
  font-size: 10.500px;
  line-height: 12px;
  width: 100%;
`;
const Rule = styled.span`
  flex: 1;
  height: 1px;
  background: #222;
`;

export default App;
